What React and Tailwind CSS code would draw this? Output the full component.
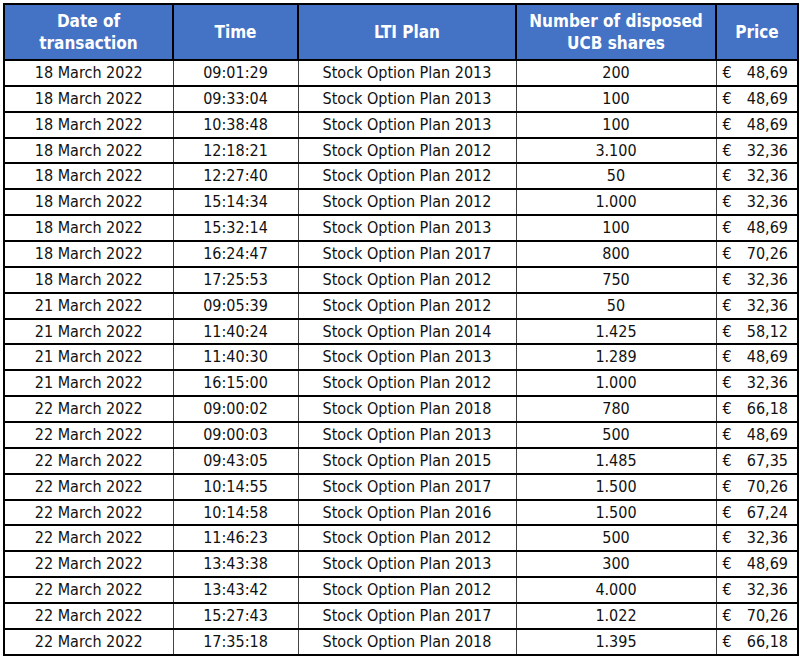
import React from 'react';

const rows = [
  ['18 March 2022', '09:01:29', 'Stock Option Plan 2013', '200', '48,69'],
  ['18 March 2022', '09:33:04', 'Stock Option Plan 2013', '100', '48,69'],
  ['18 March 2022', '10:38:48', 'Stock Option Plan 2013', '100', '48,69'],
  ['18 March 2022', '12:18:21', 'Stock Option Plan 2012', '3.100', '32,36'],
  ['18 March 2022', '12:27:40', 'Stock Option Plan 2012', '50', '32,36'],
  ['18 March 2022', '15:14:34', 'Stock Option Plan 2012', '1.000', '32,36'],
  ['18 March 2022', '15:32:14', 'Stock Option Plan 2013', '100', '48,69'],
  ['18 March 2022', '16:24:47', 'Stock Option Plan 2017', '800', '70,26'],
  ['18 March 2022', '17:25:53', 'Stock Option Plan 2012', '750', '32,36'],
  ['21 March 2022', '09:05:39', 'Stock Option Plan 2012', '50', '32,36'],
  ['21 March 2022', '11:40:24', 'Stock Option Plan 2014', '1.425', '58,12'],
  ['21 March 2022', '11:40:30', 'Stock Option Plan 2013', '1.289', '48,69'],
  ['21 March 2022', '16:15:00', 'Stock Option Plan 2012', '1.000', '32,36'],
  ['22 March 2022', '09:00:02', 'Stock Option Plan 2018', '780', '66,18'],
  ['22 March 2022', '09:00:03', 'Stock Option Plan 2013', '500', '48,69'],
  ['22 March 2022', '09:43:05', 'Stock Option Plan 2015', '1.485', '67,35'],
  ['22 March 2022', '10:14:55', 'Stock Option Plan 2017', '1.500', '70,26'],
  ['22 March 2022', '10:14:58', 'Stock Option Plan 2016', '1.500', '67,24'],
  ['22 March 2022', '11:46:23', 'Stock Option Plan 2012', '500', '32,36'],
  ['22 March 2022', '13:43:38', 'Stock Option Plan 2013', '300', '48,69'],
  ['22 March 2022', '13:43:42', 'Stock Option Plan 2012', '4.000', '32,36'],
  ['22 March 2022', '15:27:43', 'Stock Option Plan 2017', '1.022', '70,26'],
  ['22 March 2022', '17:35:18', 'Stock Option Plan 2018', '1.395', '66,18'],
];

const App = () => {
  return (
    <div className="bg-white w-[800px] h-[659px] pt-[3px] pl-[3px]" style={{ fontFamily: '"DejaVu Sans Condensed", "DejaVu Sans", sans-serif' }}>
      <table className="border-collapse border-2 border-black table-fixed w-[794px] text-[16px] leading-[20px] text-[#111]">
        <colgroup>
          <col className="w-[169px]" />
          <col className="w-[125px]" />
          <col className="w-[218px]" />
          <col className="w-[200px]" />
          <col className="w-[82px]" />
        </colgroup>
        <thead>
          <tr className="bg-[#4472c4] text-white font-bold text-[17px] leading-[22px] h-[56px]">
            <th className="border-2 border-black font-bold">Date of<br />transaction</th>
            <th className="border-2 border-black font-bold">Time</th>
            <th className="border-2 border-black font-bold">LTI Plan</th>
            <th className="border-2 border-black font-bold">Number of disposed<br />UCB shares</th>
            <th className="border-2 border-black font-bold">Price</th>
          </tr>
        </thead>
        <tbody>
          {rows.map((r, i) => (
            <tr key={i} className="h-[25.86px]">
              <td className="border-y-2 border-x border-y-black border-x-[#444] text-center p-0">{r[0]}</td>
              <td className="border-y-2 border-x border-y-black border-x-[#444] text-center p-0">{r[1]}</td>
              <td className="border-y-2 border-x border-y-black border-x-[#444] text-center p-0">{r[2]}</td>
              <td className="border-y-2 border-x border-y-black border-x-[#444] text-center p-0">{r[3]}</td>
              <td className="border-y-2 border-x border-y-black border-x-[#444] border-r-2 border-r-black p-0">
                <div className="flex justify-between pl-[6px] pr-[9px]">
                  <span>€</span>
                  <span>{r[4]}</span>
                </div>
              </td>
            </tr>
          ))}
        </tbody>
      </table>
    </div>
  );
};

export default App;
